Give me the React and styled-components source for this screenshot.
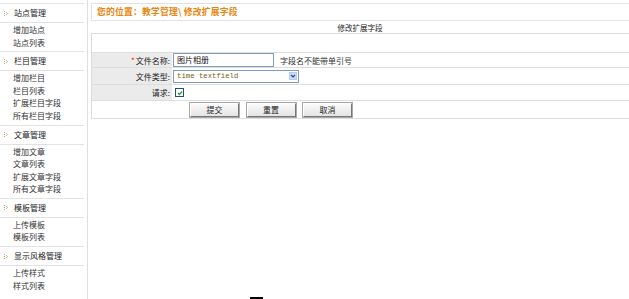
import React from 'react'
import styled, {createGlobalStyle} from 'styled-components'

const GlobalStyles = createGlobalStyle`
  html, body {
    margin: 0;
    padding: 0;
    background: #fff;
  }
  body {
    font-family: "Noto Sans CJK SC", "Liberation Sans", sans-serif;
    font-size: 8px;
    color: #333;
  }
`

const Page = styled.div`
  position: relative;
  display: flex;
  width: 629px;
  height: 299px;
  overflow: hidden;
`

const Sidebar = styled.div`
  width: 88px;
  flex: none;
  border-right: 1px solid #dedede;
  padding-top: 3px;
  box-sizing: border-box;
  height: 299px;
`

const SectionHead = styled.div`
  display: flex;
  align-items: center;
  gap: 5px;
  height: 18px;
  padding-left: 4px;
  margin-right: 3px;
  border-top: 1px solid #e2e2e2;
  border-bottom: 1px solid #e2e2e2;
  color: #222;
  line-height: 18px;
`

const ItemList = styled.div`
  padding: 1px 0 2.3px 13px;
`

const Item = styled.div`
  line-height: 12.5px;
  height: 12.5px;
  color: #333;
`

const Main = styled.div`
  flex: 1;
  padding: 3px 0 0 3px;
`

const Breadcrumb = styled.div`
  height: 16px;
  line-height: 16px;
  border: 1px solid #e2e2e2;
  border-right: none;
  padding-left: 5px;
  color: #e8850c;
  font-weight: bold;
  font-size: 8.8px;
  letter-spacing: 0.2px;
`

const Caption = styled.div`
  height: 12px;
  line-height: 14px;
  text-align: center;
  color: #222;
  font-size: 7.5px;
`

const Table = styled.div`
  border-top: 1px solid #dcdcdc;
  border-left: 1px solid #dcdcdc;
`

const Row = styled.div`
  display: grid;
  grid-template-columns: 80px 1fr;
  height: ${p => p.h}px;
  border-bottom: 1px solid #dedede;
  box-sizing: border-box;
`

const Label = styled.div`
  background: ${p => (p.plain ? '#fff' : '#ebebeb')};
  text-align: right;
  padding-right: 2px;
  display: flex;
  align-items: center;
  justify-content: flex-end;
  color: #222;
`

const Star = styled.span`
  color: #f00;
  margin-right: 1px;
`

const Value = styled.div`
  display: flex;
  align-items: center;
  padding-left: 1px;
  gap: 6px;
`

const TextInput = styled.div`
  width: 96px;
  height: 12px;
  border: 1px solid #7f9db9;
  line-height: 12px;
  padding-left: 3px;
  box-sizing: content-box;
  color: #111;
`

const Select = styled.div`
  width: 120px;
  height: 11px;
  border: 1px solid #7f9db9;
  display: flex;
  align-items: center;
  justify-content: space-between;
  padding: 0 1px 0 3px;
  font-family: "Liberation Mono", monospace;
  font-size: 7.3px;
  color: #7a5a10;
`

const Check = styled.span`
  display: inline-flex;
  margin-left: 2px;
  width: 7px;
  height: 7px;
  border: 1px solid #1c5180;
  background: #fff;
  align-items: center;
  justify-content: center;
`

const Buttons = styled.div`
  display: flex;
  gap: 7.5px;
  align-items: center;
  padding-left: 18px;
`

const Button = styled.button`
  width: 49px;
  height: 14px;
  padding: 0;
  font-family: inherit;
  font-size: 8px;
  color: #222;
  border: 1px solid;
  border-color: #fff #777 #777 #fff;
  outline: 1px solid #a8a8a8;
  background: linear-gradient(#fafafa, #e4e4e4);
  line-height: 12px;
`

const Cursor = styled.div`
  position: absolute;
  left: 250px;
  top: 297px;
  width: 13px;
  height: 2px;
  background: #000;
`

function Bullet() {
  return (
    <svg width="5" height="7" viewBox="0 0 5 7">
      <rect x="0" y="1" width="1" height="1" fill="#b8a88a" />
      <rect x="0" y="3" width="1" height="1" fill="#b8a88a" />
      <rect x="0" y="5" width="1" height="1" fill="#b8a88a" />
      <rect x="2" y="2" width="1" height="1" fill="#c9bca3" />
      <rect x="3" y="3" width="1" height="1" fill="#c9bca3" />
      <rect x="2" y="4" width="1" height="1" fill="#c9bca3" />
    </svg>
  )
}

const menu = [
  {title: '站点管理', items: ['增加站点', '站点列表']},
  {title: '栏目管理', items: ['增加栏目', '栏目列表', '扩展栏目字段', '所有栏目字段']},
  {title: '文章管理', items: ['增加文章', '文章列表', '扩展文章字段', '所有文章字段']},
  {title: '模板管理', items: ['上传模板', '模板列表']},
  {title: '显示风格管理', items: ['上传样式', '样式列表']},
]

export default function App() {
  return (
    <>
      <GlobalStyles />
      <Page>
        <Sidebar>
          {menu.map(sec => (
            <div key={sec.title}>
              <SectionHead><Bullet />{sec.title}</SectionHead>
              <ItemList>
                {sec.items.map(it => <Item key={it}>{it}</Item>)}
              </ItemList>
            </div>
          ))}
        </Sidebar>
        <Main>
          <Breadcrumb>您的位置：教学管理\ 修改扩展字段</Breadcrumb>
          <Caption>修改扩展字段</Caption>
          <Table>
            <Row h={19}><Label plain /><Value /></Row>
            <Row h={15}>
              <Label><Star>*</Star>文件名称:</Label>
              <Value>
                <TextInput>图片相册</TextInput>
                <span>字段名不能带单引号</span>
              </Value>
            </Row>
            <Row h={17}>
              <Label>文件类型:</Label>
              <Value>
                <Select>
                  <span>time textfield</span>
                  <svg width="8" height="8" viewBox="0 0 8 8">
                    <rect x="0" y="0" width="8" height="8" fill="#c8dbf7" stroke="#a7c0e6" />
                    <path d="M2 3 L4 5 L6 3" fill="none" stroke="#2a4a8a" strokeWidth="1.2" />
                  </svg>
                </Select>
              </Value>
            </Row>
            <Row h={16}>
              <Label>请求:</Label>
              <Value>
                <Check>
                  <svg width="6" height="6" viewBox="0 0 6 6">
                    <path d="M1 3 L2.5 4.5 L5 1.5" fill="none" stroke="#21a121" strokeWidth="1.2" />
                  </svg>
                </Check>
              </Value>
            </Row>
            <Row h={18}>
              <Label plain />
              <Buttons>
                <Button>提交</Button>
                <Button>重置</Button>
                <Button>取消</Button>
              </Buttons>
            </Row>
          </Table>
        </Main>
        <Cursor />
      </Page>
    </>
  )
}
